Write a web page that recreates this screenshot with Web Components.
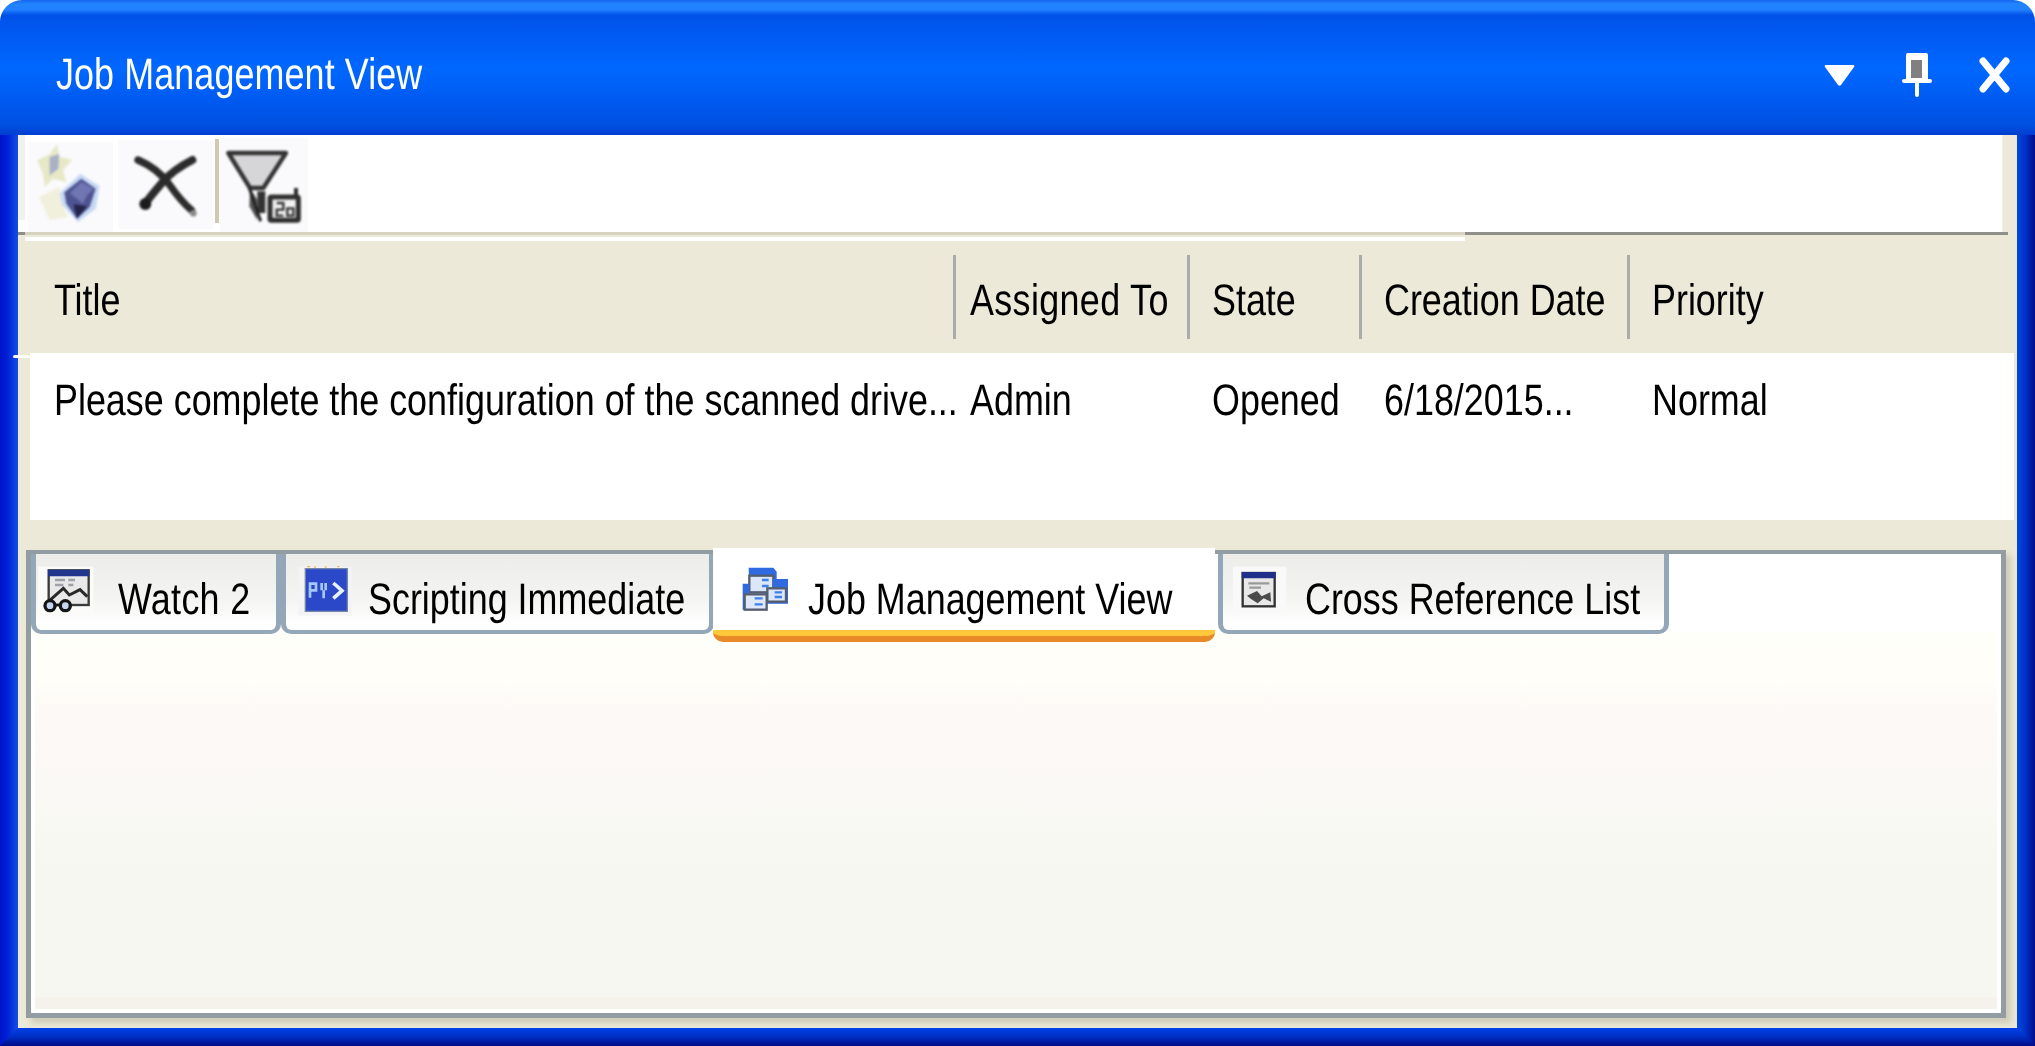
<!DOCTYPE html>
<html><head><meta charset="utf-8"><title>Job Management View</title>
<style>
html,body{margin:0;padding:0;background:#fff}
body{font:35.9px "Liberation Sans",Arial,sans-serif;color:#000;text-rendering:geometricPrecision}
</style></head><body>
<job-window>
  <title-bar slot="title" label="Job Management View"></title-bar>
  <job-toolbar slot="content"></job-toolbar>
  <task-table slot="content"></task-table>
  <tab-panel slot="content">
    <tab-item icon="watch" width="250" pad="87" track=".3">Watch 2</tab-item>
    <tab-item icon="script" width="433" pad="87">Scripting Immediate</tab-item>
    <tab-item icon="job" width="502" pad="95">Job Management View</tab-item>
    <tab-item icon="xref" width="451" pad="87" gap="3">Cross Reference List</tab-item>
  </tab-panel>
</job-window>
<script>
document.querySelector('tab-item[icon=job]').setAttribute('active','');
class TallText extends HTMLElement{constructor(){super();this.attachShadow({mode:'open'}).innerHTML=`<style>
:host{display:inline-block;font-size:35.9px;line-height:35.7px;height:35.7px;white-space:nowrap;transform:scaleY(1.228)}
</style><slot></slot>`}}
customElements.define('tall-text',TallText);

class JobWindow extends HTMLElement{constructor(){super();this.attachShadow({mode:'open'}).innerHTML=`<style>
:host{display:grid;width:2035px;height:1046px;grid-template-columns:18px 1fr 18px;grid-template-rows:135px 1fr 18px;overflow:hidden}
.t{grid-column:1/4;grid-row:1}
.l{grid-column:1;grid-row:2/4;background:linear-gradient(90deg,#0014c8,#0020d8 40%,#1050e4)}
.r{grid-column:3;grid-row:2/4;background:linear-gradient(90deg,#0048e4,#0034cc 40%,#000c8c)}
.b{grid-column:1/4;grid-row:3;background:linear-gradient(180deg,#0040e8,#0030c8 45%,#000c88);clip-path:polygon(0 100%,18px 0,calc(100% - 18px) 0,100% 100%);z-index:1}
.c{grid-column:2;grid-row:2;background:#ece9d8;position:relative;display:flex;flex-direction:column;min-height:0}
</style><div class="t"><slot name="title"></slot></div><div class="l"></div><div class="c"><slot name="content"></slot></div><div class="r"></div><div class="b"></div>`}}
customElements.define('job-window',JobWindow);

class TitleBar extends HTMLElement{constructor(){super();this.attachShadow({mode:'open'}).innerHTML=`<style>
:host{display:flex;align-items:flex-start;height:135px;box-sizing:border-box;padding:53px 25px 0 56px;border-radius:22px 22px 0 0;color:#fff;
background:linear-gradient(180deg,#1566ee 0,#2384ff 4px,#2080ff 10px,#0052e8 15px,#0058f0 30px,#0068ff 68px,#0058ee 105px,#0050e2 125px,#003ed0 135px)}
.n{flex:1;margin-top:1px}
tall-text{letter-spacing:.1px}
.i{display:flex;align-items:flex-start;gap:47px}
svg{display:block}
</style><div class="n"><tall-text></tall-text></div><div class="i">
<svg width="31" height="21" viewBox="0 0 31 21" style="margin-top:12px"><path d="M2 0H29Q31 0 30 2L17 20Q15.500 21.500 14 20L1 2Q0 0 2 0Z" fill="#fff"/></svg>
<svg width="30" height="44" viewBox="0 0 30 44"><path d="M6 0H24Q26 0 26 2V26H28Q30 26 30 28T28 30H17V42Q17 44 15 44T13 42V30H2Q0 30 0 28T2 26H4V2Q4 0 6 0Z" fill="#fff"/><rect x="9" y="7" width="11" height="18" fill="#808080"/></svg>
<svg width="31" height="36" viewBox="0 0 31 36" style="margin-top:4px"><path d="M4 4L27 32M27 4L4 32" fill="none" stroke="#fff" stroke-width="7" stroke-linecap="round"/></svg>
</div>`;this.shadowRoot.querySelector('tall-text').textContent=this.getAttribute('label')}}
customElements.define('title-bar',TitleBar);

class JobToolbar extends HTMLElement{constructor(){super();this.attachShadow({mode:'open'}).innerHTML=`<style>
:host{display:block;position:relative;height:105px}
.w{height:97px;margin-right:14px;background:#fff;display:flex;align-items:flex-start;padding-left:10px;box-sizing:border-box;border-right:1px solid #f6eee0;position:relative}
.w::before{content:"";position:absolute;left:0;top:0;width:7px;height:85px;background:#f0f0ee}
.b{background:#fafafc;flex:none}
.s{width:4px;height:84px;margin:4px 1px 0 2px;background:#cfc9b2;flex:none}
svg{display:block;filter:blur(1px)}
.ln{height:3px;margin-right:9px;background:linear-gradient(90deg,#8e8e86 7px,#d8d2c0 7px,#d8d2c0 1447px,#8f8f8b 1447px)}
.wl{height:4px;margin:2px 0 0 7px;width:1440px;background:#fff}
</style><div class="w">
<div class="b" style="width:85px;height:90px;margin:7px 5px 0 0"><svg width="85" height="90" viewBox="85 425 255 270">
<path d="M112 480L150 462 172 432 180 470 218 478 190 510 200 545 160 535 135 560 130 520Z" fill="#e6e8c6"/>
<path d="M118 590L178 560 190 620 205 650 150 660Z" fill="#f0f0dc"/>
<path d="M150 470L178 462 176 505 150 525Z" fill="#aab0c6"/>
<path d="M180 578L242 520 300 558 288 625 235 665 188 615Z" fill="#c6d8f4"/>
<path d="M194 576L245 535 288 565 270 620 232 655 200 610Z" fill="#4e5490"/>
<path d="M210 578L245 545 282 566 262 585 250 610 225 590Z" fill="#6f76b2"/>
<path d="M232 655L222 612 262 618Z" fill="#22244c"/>
</svg></div>
<div class="b" style="width:95px;height:89px;margin-top:5px"><svg width="95" height="89" viewBox="355 430 285 267">
<path d="M415 490Q475 515 510 565T575 640" fill="none" stroke="#2c2c2c" stroke-width="22" stroke-linecap="round"/>
<path d="M578 490Q520 520 490 555T435 622" fill="none" stroke="#2c2c2c" stroke-width="24" stroke-linecap="round"/>
<circle cx="437" cy="622" r="18" fill="#1c1c1c"/><circle cx="581" cy="650" r="10" fill="#8a8a8a"/>
</svg></div>
<div class="s"></div>
<div class="b" style="width:88px;height:94px;margin-top:3px"><svg width="88" height="94" viewBox="660 415 264 282">
<path d="M685 460H858L790 565 750 565Z" fill="#d6d6d8" stroke="#333" stroke-width="13" stroke-linejoin="round"/>
<path d="M750 565L772 600V662L748 620Z" fill="#555"/><path d="M772 575H796V640H772Z" fill="#333"/><path d="M748 565L782 665" stroke="#222" stroke-width="9"/>
<rect x="810" y="592" width="85" height="70" fill="#f2f2f2" stroke="#2e2e2e" stroke-width="15" rx="4"/><path d="M888 590V565" stroke="#2e2e2e" stroke-width="12"/>
<path d="M830 610H850V630H830V648H850M862 626H880V648H862Z" fill="none" stroke="#333" stroke-width="7"/>
</svg></div>
</div><div class="ln"></div><div class="wl"></div>`}}
customElements.define('job-toolbar',JobToolbar);

class TaskTable extends HTMLElement{constructor(){super();
const cols=[['Title','Please complete the configuration of the scanned drive...',938,36],['Assigned To','Admin',234,14],['State','Opened',172,22],['Creation Date','6/18/2015...',268,22],['Priority','Normal',0,22]];
this.attachShadow({mode:'open'}).innerHTML=`<style>
:host{display:block;position:relative}
.h,.d{display:grid}
.h{height:113px;align-items:center;grid-template-columns:${cols.map(c=>c[2]?c[2]+'px':'1fr').join(' ')}}
.h div{height:84px;box-sizing:border-box;padding-top:8px;display:flex;align-items:center;border-right:3px solid #aaaca8;white-space:nowrap}
.h div:last-child{border:0}
.d{height:167px;margin:0 3px 0 12px;background:#fff;grid-template-columns:927px 234px 172px 268px 1fr}
.d div{padding-top:27px;white-space:nowrap}
.tick{position:absolute;left:-5px;top:115px;width:17px;height:3px;background:#fff;border-radius:2px}
.a{letter-spacing:.35px}
</style><div class="h">${cols.map((c,i)=>`<div style="padding-left:${c[3]}px"><tall-text class="${i==1?'a':''}">${c[0]}</tall-text></div>`).join('')}</div>
<div class="d">${cols.map((c,i)=>`<div style="padding-left:${i?(i==1?13:21):24}px"><tall-text>${c[1]}</tall-text></div>`).join('')}</div><div class="tick"></div>`}}
customElements.define('task-table',TaskTable);

class TabItem extends HTMLElement{constructor(){super();
const ic={
watch:`<rect x="25" y="35" width="165" height="150" fill="#fbfbf9"/>
<rect x="56" y="46" width="120" height="104" fill="#e9e9ea" stroke="#3a3a3a" stroke-width="7"/><path d="M54 44H178V64H54Z" fill="#22368e"/>
<path d="M75 75H105M115 75H135M75 90H100M115 90H130" stroke="#a0a0a8" stroke-width="7"/>
<path d="M55 140L100 100 118 120 150 104 172 125" fill="none" stroke="#2a2a2a" stroke-width="9"/>
<circle cx="60" cy="152" r="15" fill="#c4d6f2" stroke="#151515" stroke-width="10"/><circle cx="106" cy="152" r="15" fill="#c4d6f2" stroke="#151515" stroke-width="10"/><path d="M75 150H91" stroke="#151515" stroke-width="8"/>`,
script:`<rect x="25" y="35" width="160" height="147" fill="#f3f3f5"/>
<rect x="46" y="41" width="126" height="128" fill="#2a48c8" stroke="#7085a8" stroke-width="4"/>
<path d="M60 128V86H78V106H60M95 84V106M107 84V106M101 106V130" fill="none" stroke="#a6c8f8" stroke-width="8"/>
<path d="M130 84L156 107 130 130" fill="none" stroke="#e6f0ff" stroke-width="11"/>
<path d="M52 35h8M72 36h6M104 36h6M142 35h6" stroke="#f0a030" stroke-width="3"/>`,
job:`<path d="M68 38H142L152 50V112H70Z" fill="#2f6ae0"/><rect x="70" y="62" width="72" height="50" fill="#dbe6f8" stroke="#555d70" stroke-width="7"/><path d="M108 75H128M108 93H128" stroke="#3f80ec" stroke-width="8"/>
<path d="M140 72H186V146H118V112H140Z" fill="#2f6ae0"/><rect x="124" y="100" width="56" height="40" fill="#dbe6f8" stroke="#555d70" stroke-width="7"/><path d="M146 112H168M146 126H168" stroke="#3f80ec" stroke-width="7"/>
<path d="M50 86H70V118H122V164H50Z" fill="#2f6ae0"/><rect x="56" y="118" width="66" height="46" fill="#dfe8f8" stroke="#555d70" stroke-width="7"/><path d="M86 130H110M86 148H110" stroke="#3f80ec" stroke-width="7"/>`,
xref:`<rect x="36" y="35" width="160" height="145" fill="#f9f9f9"/>
<rect x="65" y="54" width="96" height="100" fill="#e8e8e8" stroke="#333" stroke-width="7"/><path d="M62 51H164V70H62Z" fill="#20308a"/>
<path d="M82 85H145M85 98H120" stroke="#999" stroke-width="7"/>
<path d="M78 122L108 108 122 124 148 112 150 140 128 130 110 145 90 132Z" fill="#4a4a4a"/>`};
const w=this.getAttribute('width'),p=+this.getAttribute('pad'),a=this.hasAttribute('active'),g=+(this.getAttribute('gap')||0),tr=this.getAttribute('track')||0;
const il={watch:-1,script:9,job:13,xref:3}[this.getAttribute('icon')];
this.attachShadow({mode:'open'}).innerHTML=`<style>
:host{display:block;position:relative;flex:none;box-sizing:border-box;width:${w}px;height:${a?94:80}px;margin:${a?'-6px 0 0 -1px':'0 0 0 '+g+'px'};white-space:nowrap}
.b{box-sizing:border-box;height:100%;padding-left:${a?p:p-5}px;border-radius:0 0 10px 10px;padding-top:${a?31:25}px;
${a?'background:linear-gradient(180deg,#fff 82px,#ffc83a 82px);border-bottom:6px solid #e88a28;':'background:linear-gradient(180deg,#ecece9,#f4f4f2 60%,#fff 92%);border:solid #94a7b8;border-width:0 5px 4px;'}}
svg{position:absolute;display:block;left:${il}px;top:${a?7:1}px;filter:blur(.7px)}
tall-text{letter-spacing:${tr}px}
</style><div class="b"><svg width="80" height="70" viewBox="0 0 240 210">${ic[this.getAttribute('icon')]}</svg><tall-text><slot></slot></tall-text></div>`}}
customElements.define('tab-item',TabItem);

class TabPanel extends HTMLElement{constructor(){super();this.attachShadow({mode:'open'}).innerHTML=`<style>
:host{display:block;box-sizing:border-box;margin:30px 11px 10px 8px;flex:1;min-height:0;border:solid #929da3;border-width:4px 5px 5px 5px;background:#fff;
box-shadow:5px 5px 6px rgba(120,115,90,.25);position:relative}
.s{display:flex;position:relative;z-index:1;height:80px}
.p{position:absolute;left:4px;right:4px;top:78px;bottom:4px;background:linear-gradient(180deg,#fffffa 0,#fffef9 13%,#fdf9f6 22%,#fbf9f5 38%,#f9f9f4 50%,#f7f7f2 62%,#f7f7f2 96.800%,#f5f2ec 96.800%)}
</style><div class="p"></div><div class="s"><slot></slot></div>`}}
customElements.define('tab-panel',TabPanel);
</script></body></html>
